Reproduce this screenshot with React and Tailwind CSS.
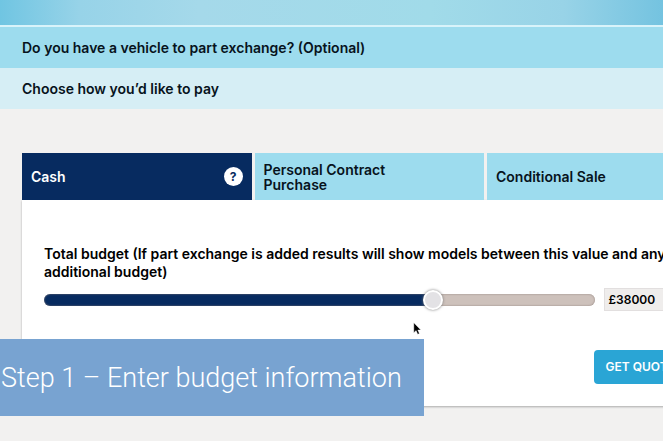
import { useState } from "react";

const MIN_BUDGET = 8000;
const MAX_BUDGET = 50000;

const tabs = [
  { id: "cash", name: "Cash" },
  { id: "pcp", name: "Personal Contract Purchase" },
  { id: "conditional", name: "Conditional Sale" },
];

function PaymentTabs({ active, onChange }) {
  return (
    <div className="grid grid-cols-3 gap-[3px]">
      {tabs.map((tab) => {
        const selected = tab.id === active;

        return (
          <div
            key={tab.id}
            className={`flex h-[47px] items-center pr-[9px] ${
              selected ? "bg-[#072b60] text-white" : "bg-[#9ddcee] text-[#07131c]"
            }`}
          >
            <button
              type="button"
              aria-pressed={selected}
              onClick={() => onChange(tab.id)}
              className="h-full flex-1 pr-8 pl-[9px] text-left leading-[15px]"
            >
              {tab.name}
            </button>
            {selected && (
              <button
                type="button"
                aria-label="Help"
                className="flex size-[19px] items-center justify-center rounded-full bg-white text-[12px] font-bold text-[#072b60]"
              >
                ?
              </button>
            )}
          </div>
        );
      })}
    </div>
  );
}

function BudgetSlider({ value, onChange }) {
  const percent = ((value - MIN_BUDGET) / (MAX_BUDGET - MIN_BUDGET)) * 100;

  return (
    <input
      id="budget"
      type="range"
      min={MIN_BUDGET}
      max={MAX_BUDGET}
      step={500}
      value={value}
      onChange={(e) => onChange(Number(e.target.value))}
      style={{
        backgroundImage: `linear-gradient(to right, #072b60 ${percent}%, #cdc1bb ${percent}%)`,
      }}
      className="h-3 min-w-0 flex-1 appearance-none rounded-full shadow-[inset_0_0_2px_#8b7d78] [&::-webkit-slider-thumb]:size-5 [&::-webkit-slider-thumb]:appearance-none [&::-webkit-slider-thumb]:rounded-full [&::-webkit-slider-thumb]:border-2 [&::-webkit-slider-thumb]:border-white [&::-webkit-slider-thumb]:bg-[#e3e2e5] [&::-webkit-slider-thumb]:shadow-[0_0_3px_#777]"
    />
  );
}

function Pointer() {
  return (
    <svg
      viewBox="0 0 8 13"
      className="pointer-events-none absolute top-[322px] left-[413px] h-[13px] w-2"
      aria-hidden="true"
    >
      <path
        d="M.8.7v10l2.3-2.1 1.6 3.7 1.7-.7-1.6-3.6h3z"
        fill="#000"
        stroke="#fff"
        strokeWidth=".4"
      />
    </svg>
  );
}

function App() {
  const [tab, setTab] = useState("cash");
  const [budget, setBudget] = useState(38000);

  return (
    <div className="relative min-h-screen overflow-hidden bg-[#f2f1f0] font-['Inter',sans-serif] text-[14px] font-semibold text-[#07131c]">
      <div className="h-[27px] border-b-2 border-[#d8f3fa] bg-[linear-gradient(to_right,#70c5e2,#97d3e8_12%,#a5d9ea_30%,#a1dbe9_65%,#98d3e7_85%,#74c3e0)]" />
      <h2 className="bg-[#9ddcee] px-[22px] py-[10px] leading-[21px]">
        Do you have a vehicle to part exchange? (Optional)
      </h2>
      <h2 className="bg-[#d6eef5] px-[22px] py-[10px] leading-[21px]">
        Choose how you’d like to pay
      </h2>

      <main className="w-[112%] pt-11 pr-[26px] pb-8 pl-[22px]">
        <PaymentTabs active={tab} onChange={setTab} />

        <section className="bg-white px-[22px] pt-[45px] pb-[22px] text-black shadow-[0_1px_2px_#aaa]">
          <label htmlFor="budget" className="block leading-[18px]">
            Total budget (If part exchange is added results will show models
            between this value and any additional budget)
          </label>

          <div className="mt-[7px] flex items-center gap-[9px]">
            <BudgetSlider value={budget} onChange={setBudget} />
            <label className="flex h-[23px] w-[91px] items-center border border-[#e2dfdf] bg-[#efedec] pl-1 text-[12px]">
              £
              <input
                type="text"
                aria-label="Budget in pounds"
                value={budget}
                onChange={(e) => setBudget(Number(e.target.value) || 0)}
                className="w-full min-w-0 bg-transparent"
              />
            </label>
          </div>

          <div className="mt-[39px] flex justify-end">
            <button
              type="button"
              className="h-[34px] w-[101px] rounded-[4px] bg-[#2aa5d5] pl-3 text-left text-[12px] text-white"
            >
              GET QUOTES
            </button>
          </div>
        </section>
      </main>

      <Pointer />
      <p className="absolute top-[339px] left-0 bg-[#78a3d1] pt-[2px] pr-[22px] pl-px font-['Roboto',sans-serif] text-[27px] leading-[75px] font-[350] whitespace-nowrap text-white">
        Step 1 – Enter budget information
      </p>
    </div>
  );
}

export default App;
